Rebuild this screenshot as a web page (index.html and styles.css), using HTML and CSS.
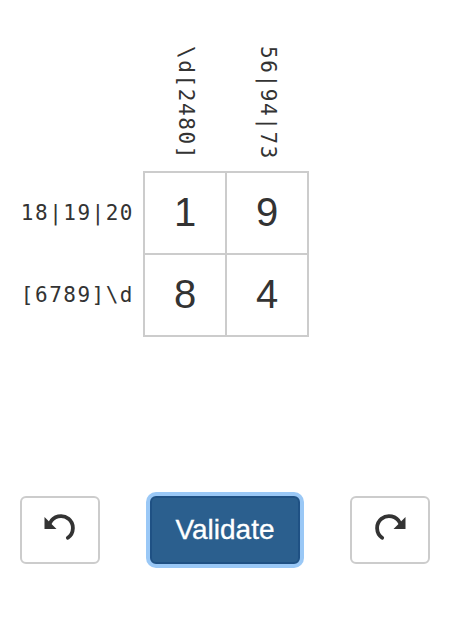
FILE: index.html
```html
<!DOCTYPE html>
<html>
<head>
<meta charset="utf-8">
<link rel="stylesheet" href="styles.css">
</head>
<body>
<div class="page">
  <table class="puzzle">
    <tr>
      <th class="corner"></th>
      <th class="col-label"><span class="vtext">\d[2480]</span></th>
      <th class="col-label"><span class="vtext">56|94|73</span></th>
    </tr>
    <tr>
      <th class="row-label">18|19|20</th>
      <td class="cell">1</td>
      <td class="cell">9</td>
    </tr>
    <tr>
      <th class="row-label">[6789]\d</th>
      <td class="cell">8</td>
      <td class="cell">4</td>
    </tr>
  </table>
  <div class="controls">
    <button class="btn btn-icon" aria-label="Undo">
      <svg class="icon" width="32" height="32" viewBox="0 0 32 32">
        <path d="M6 9 A12 12 0 1 1 23.9 23.8" fill="none" stroke="#333" stroke-width="3.8" stroke-linecap="round"/>
        <polygon points="0.5,3 0.5,15 12.5,15" fill="#333"/>
      </svg>
    </button>
    <button class="btn btn-primary">Validate</button>
    <button class="btn btn-icon" aria-label="Redo">
      <svg class="icon icon-flip" width="32" height="32" viewBox="0 0 32 32">
        <path d="M6 9 A12 12 0 1 1 23.9 23.8" fill="none" stroke="#333" stroke-width="3.8" stroke-linecap="round"/>
        <polygon points="0.5,3 0.5,15 12.5,15" fill="#333"/>
      </svg>
    </button>
  </div>
</div>
</body>
</html>
```
FILE: styles.css
```css
html, body {
  margin: 0;
  padding: 0;
  background: #fff;
}
.page {
  width: 454px;
  height: 624px;
  font-family: "Liberation Sans", Arial, sans-serif;
  color: #333;
}
.puzzle {
  border-collapse: collapse;
  margin: 0;
  padding: 0;
}
.puzzle th, .puzzle td {
  padding: 0;
}
.puzzle .corner {
  width: 144px;
}
.puzzle .col-label {
  vertical-align: bottom;
  padding: 46px 0 11px 0;
  font-size: 0;
  line-height: 0;
}
.vtext {
  display: inline-block;
  writing-mode: vertical-rl;
  font-family: "DejaVu Sans Mono", monospace;
  font-size: 21px;
  font-weight: normal;
  letter-spacing: 1.6px;
  color: #333;
  line-height: 1;
  vertical-align: top;
}
.puzzle .row-label {
  text-align: right;
  padding: 0 9px 0 0;
  font-family: "DejaVu Sans Mono", monospace;
  font-size: 21px;
  font-weight: normal;
  letter-spacing: 1.5px;
  color: #333;
}
.puzzle .cell {
  width: 80px;
  height: 80px;
  border: 2px solid #ccc;
  text-align: center;
  vertical-align: middle;
  font-size: 40px;
  color: #333;
}
.controls {
  display: flex;
  align-items: center;
  gap: 50px;
  padding-left: 20px;
  margin-top: 159px;
}
.btn {
  box-sizing: border-box;
  height: 68px;
  border-radius: 6px;
  padding: 0;
  display: flex;
  align-items: center;
  justify-content: center;
  font-family: "Liberation Sans", Arial, sans-serif;
}
.btn-icon {
  width: 80px;
  background: #fff;
  border: 2px solid #ccc;
}
.icon {
  display: block;
}
.icon-flip {
  transform: scaleX(-1);
}
.btn-primary {
  width: 150px;
  background: #2b5f8e;
  border: 2px solid #1f5184;
  box-shadow: 0 0 0 4px #9ac8f6;
  color: #fff;
  font-size: 28px;
  -webkit-text-stroke: 0.3px #fff;
}
```
